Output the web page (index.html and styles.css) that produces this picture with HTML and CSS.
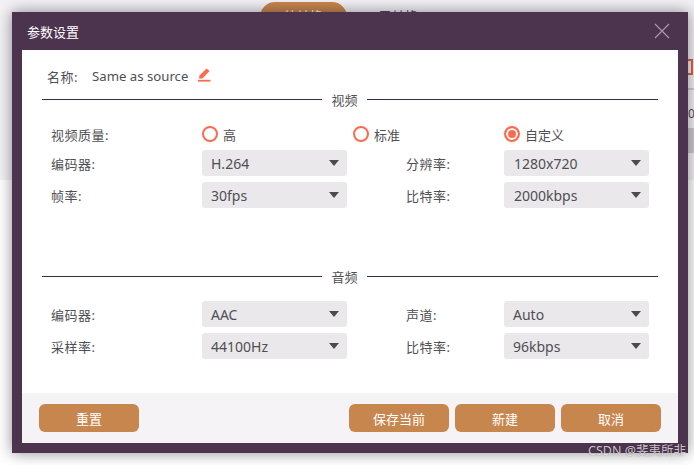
FILE: index.html
```html
<!DOCTYPE html>
<html lang="zh-CN">
	<head>
		<meta charset="UTF-8" />
		<title>参数设置</title>
		<link rel="stylesheet" href="styles.css">
	</head>
	<body>
		<div class="app">
			<div class="tabs">
				<span class="tab active">待转换</span>
				<span class="tab">已转换</span>
			</div>
			<div class="app-side">
				<span class="side-icon"></span>
				<span class="side-rule"></span>
				<span class="side-time">03</span>
				<span class="side-bar"></span>
			</div>
		</div>

		<div class="dialog">
			<div class="dialog-title">
				<span>参数设置</span>
				<svg class="close" width="16" height="16" viewBox="0 0 16 16">
					<path d="M1 1L15 15M15 1L1 15" stroke="#a899a6" stroke-width="1.2" fill="none" />
				</svg>
			</div>
			<div class="dialog-body">
				<div class="name-row">
					<span class="name-label">名称:</span>
					<span class="name-value">Same as source</span>
					<svg class="edit" width="13" height="14" viewBox="0 0 13 14">
						<path d="M1 10.5L1.5 7.5L8.5 0.5L11.5 3L4.5 10.5Z" fill="#ff6a4d" />
						<rect x="0" y="11.8" width="12.5" height="1.8" fill="#ff6a4d" />
					</svg>
				</div>

				<div class="section-head"><span>视频</span></div>
				<div class="quality-row">
					<span class="label">视频质量:</span>
					<label class="radio radio-high"><i class="dot"></i>高</label>
					<label class="radio radio-std"><i class="dot"></i>标准</label>
					<label class="radio radio-custom"><i class="dot on"></i>自定义</label>
				</div>
				<div class="field-grid">
					<span class="label">编码器:</span>
					<div class="select">H.264</div>
					<span class="label label-right">分辨率:</span>
					<div class="select select-right">1280x720</div>
					<span class="label">帧率:</span>
					<div class="select">30fps</div>
					<span class="label label-right">比特率:</span>
					<div class="select select-right">2000kbps</div>
				</div>

				<div class="section-head audio-head"><span>音频</span></div>
				<div class="field-grid audio-grid">
					<span class="label">编码器:</span>
					<div class="select">AAC</div>
					<span class="label label-right">声道:</span>
					<div class="select">Auto</div>
					<span class="label">采样率:</span>
					<div class="select">44100Hz</div>
					<span class="label label-right">比特率:</span>
					<div class="select">96kbps</div>
				</div>
			</div>
			<div class="dialog-foot">
				<button class="btn">重置</button>
				<div class="foot-right">
					<button class="btn">保存当前</button>
					<button class="btn">新建</button>
					<button class="btn">取消</button>
				</div>
			</div>
		</div>

		<div class="watermark">CSDN @斐夷所非</div>
	</body>
</html>
```

FILE: styles.css
```css
* {
	box-sizing: border-box;
	margin: 0;
	padding: 0;
}
html,
body {
	height: 100%;
	overflow: hidden;
}
body {
	font-family: "Noto Sans", "Noto Sans CJK SC", sans-serif;
	font-size: 13px;
	color: #4f4f54;
	background-color: #fff;
}
.app {
	height: 180px;
	background-color: #f3f1f5;
	overflow: hidden;
}
.tabs {
	display: flex;
	padding: 2px 0 0 260px;
	gap: 8px;
}
.tab {
	width: 87px;
	height: 30px;
	line-height: 28px;
	text-align: center;
	border-radius: 15px;
}
.tab.active {
	background-color: #c8864f;
	color: #fff;
}
.app-side {
	position: absolute;
	left: 688px;
	top: 59px;
	width: 6px;
	overflow: hidden;
}
.side-icon {
	display: block;
	width: 5px;
	height: 16px;
	border: 2px solid #e8603c;
	border-left: 0;
}
.side-rule {
	display: block;
	height: 2px;
	margin-top: 13px;
	background-color: #cfcdd1;
}
.side-time {
	display: block;
	margin-top: 17px;
	font-size: 12px;
	line-height: 14px;
	white-space: nowrap;
}
.side-bar {
	display: block;
	height: 25px;
	margin-top: 7px;
	background-color: #cdc9cd;
}
.dialog {
	position: absolute;
	left: 12px;
	top: 12px;
	width: 676px;
	height: 441px;
	display: flex;
	flex-direction: column;
	padding: 0 10px 10px;
	background-color: #4c334e;
	box-shadow: 0 0 14px rgba(0, 0, 0, 0.45);
}
.dialog-title {
	flex: none;
	height: 38px;
	display: flex;
	align-items: center;
	justify-content: space-between;
	padding: 0 8px 0 5px;
	color: #fff;
}
.close {
	display: block;
}
.dialog-body {
	flex: 1;
	padding: 0 20px;
	background-color: #fff;
}
.name-row {
	display: flex;
	align-items: center;
	height: 26px;
	margin-top: 13px;
	padding-left: 5px;
}
.name-label {
	width: 45px;
	letter-spacing: 0.5px;
}
.name-value {
	font-size: 13.2px;
}
.edit {
	margin: -3px 0 0 10px;
}
.section-head {
	display: flex;
	align-items: center;
	height: 20px;
	gap: 9px;
}
.section-head::before {
	content: "";
	width: 280px;
	height: 1px;
	background-color: #3f2a42;
}
.section-head::after {
	content: "";
	flex: 1;
	height: 1px;
	background-color: #3f2a42;
}
.section-head span {
	width: 27px;
	text-align: center;
	white-space: nowrap;
}
.quality-row {
	display: flex;
	align-items: center;
	height: 22px;
	margin-top: 14px;
	padding-left: 9px;
}
.label {
	white-space: nowrap;
	letter-spacing: 0.5px;
}
.label-right {
	padding-left: 59px;
}
.quality-row .label {
	width: 151px;
}
.radio {
	display: flex;
	align-items: center;
	gap: 5px;
}
.radio-high {
	width: 151px;
}
.radio-std {
	width: 151px;
}
.dot {
	width: 16px;
	height: 16px;
	border: 2px solid #ff6a4d;
	border-radius: 50%;
	background-color: #fff;
}
.dot.on {
	background-color: #ff6a4d;
	box-shadow: inset 0 0 0 2px #fff;
}
.field-grid {
	display: grid;
	grid-template-columns: 151px 145px 157px 145px;
	grid-auto-rows: 26px;
	row-gap: 6px;
	align-items: center;
	margin-top: 5px;
	padding-left: 9px;
}
.select {
	position: relative;
	height: 26px;
	line-height: 27px;
	padding-left: 9px;
	border-radius: 3px;
	background-color: #eae8eb;
	font-size: 14px;
}
.select-right {
	padding-left: 10px;
}
.select::after {
	content: "";
	position: absolute;
	right: 8px;
	top: 10px;
	border-left: 5px solid transparent;
	border-right: 5px solid transparent;
	border-top: 6px solid #4a4a4f;
}
.audio-head {
	margin-top: 58px;
}
.audio-grid {
	margin-top: 15px;
}
.dialog-foot {
	flex: none;
	height: 50px;
	display: flex;
	justify-content: space-between;
	padding: 11px 17px 0;
	background-color: #f5f3f6;
}
.foot-right {
	display: flex;
	gap: 6px;
}
.btn {
	width: 100px;
	height: 28px;
	border: none;
	border-radius: 6px;
	background-color: #c8864f;
	color: #fff;
	font-family: inherit;
	font-size: 13px;
}
.watermark {
	position: absolute;
	right: 8px;
	top: 443px;
	font-size: 12.5px;
	line-height: 16px;
	color: rgba(255, 255, 255, 0.75);
	text-shadow: 0 0 1px rgba(0, 0, 0, 0.5);
}
```
